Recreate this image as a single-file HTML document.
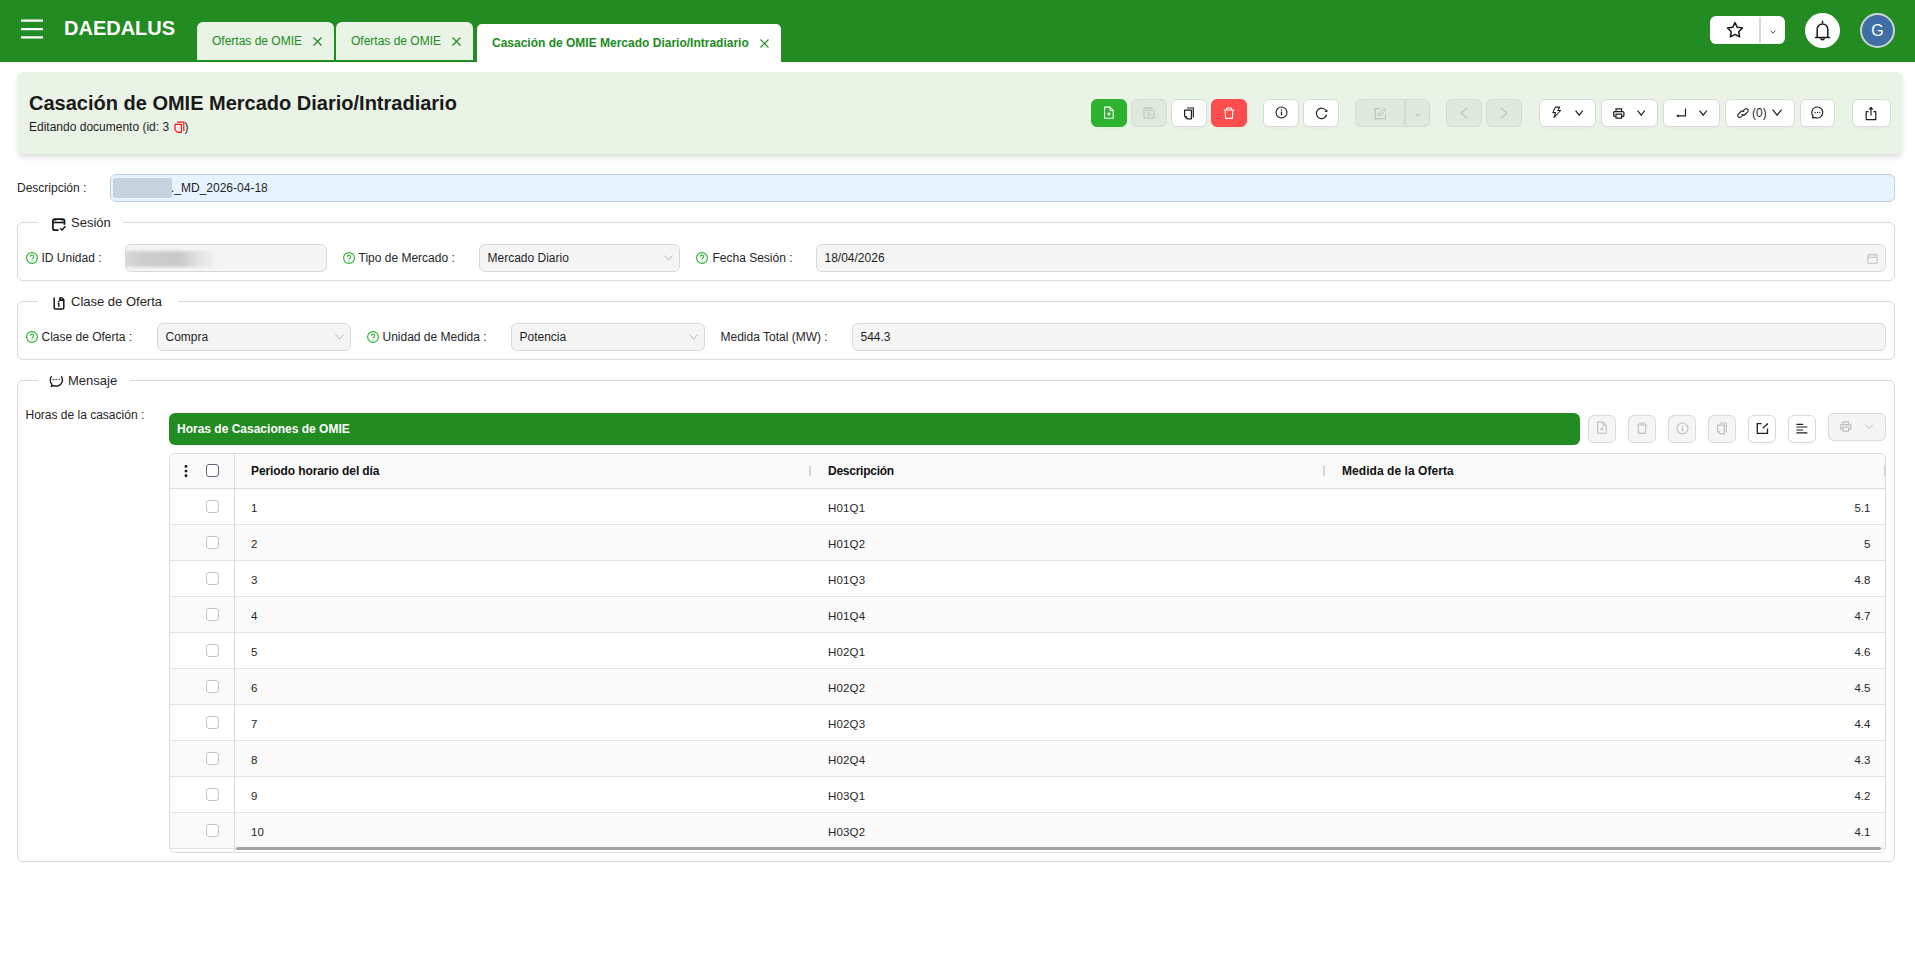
<!DOCTYPE html>
<html><head><meta charset="utf-8"><title>Daedalus</title><style>
*{box-sizing:border-box;margin:0;padding:0}
html,body{width:1915px;height:959px;overflow:hidden;background:#fff}
body{font-family:"Liberation Sans",sans-serif;font-size:12px;color:#1f1f1f;position:relative}
.a{position:absolute}
.t{position:absolute;white-space:nowrap;line-height:14px}
#hdr{left:0;top:0;width:1915px;height:62px;background:#228B22}
.tab{position:absolute;top:22px;height:38px;background:#e9f3e6;border-radius:6px 6px 0 0;color:#228B22}
.tab.on{top:24px;height:38px;background:#fff;font-weight:bold;border-radius:5px 5px 0 0}
.btn{position:absolute;top:99px;height:28px;width:36px;border-radius:6px;background:#fff;border:1px solid #d9d9d9;box-shadow:0 2px 0 rgba(0,0,0,0.02)}
.btn.dis{background:#e0e9dd;border-color:#d9d8d9;box-shadow:none}
.btn svg,.sb svg{position:absolute}
.sb{position:absolute;top:415px;height:28px;width:28px;border-radius:6px;background:#fff;border:1px solid #d9d9d9;box-shadow:0 2px 0 rgba(0,0,0,0.02)}
.sb.dis{background:#f5f5f5;box-shadow:none}
.fs{position:absolute;left:17px;width:1878px;border:1px solid #d9d9d9;border-radius:6px}
.lg{position:absolute;background:#fff;height:14px}
.lg .t{font-size:13px;line-height:16px;color:#262626}
.inp{position:absolute;height:28px;border:1px solid #d9d9d9;border-radius:6px;background:#f5f5f5}
.inp .t{top:6px;left:7.5px;color:#1f1f1f}
.lbl{color:#262626;margin-left:-0.500px}
.row{position:absolute;left:170px;width:1715px;height:36px;border-bottom:1px solid #e2e2e2}
.row.alt{background:#fafafa}
.row .t{top:12px;font-size:11.5px;letter-spacing:0.15px;color:#262626}
.cb{position:absolute;left:36px;top:11px;width:13px;height:13px;border:1px solid #c4c4c4;border-radius:3px;background:#fff}
</style></head><body>
<div id="hdr" class="a">
<svg class="a" style="left:21px;top:18px" width="22" height="22" viewBox="0 0 22 22" ><path d="M0 2.6H22M0 11.1H22M0 19.4H22" stroke="#fff" stroke-width="2.4"/></svg>
<div class="t" style="left:64px;top:18px;font-size:20px;line-height:20px;font-weight:bold;color:#fff">DAEDALUS</div>
<div class="tab" style="left:197px;width:137px"><div class="t" style="left:15px;top:12px">Ofertas de OMIE</div><svg class="a" style="left:116.3px;top:15px" width="9" height="9" viewBox="0 0 9 9" ><path d="M0.5 0.5L8.5 8.5M8.5 0.5L0.5 8.5" stroke="#228B22" stroke-width="1.2" fill="none"/></svg></div>
<div class="tab" style="left:336px;width:137px"><div class="t" style="left:15px;top:12px">Ofertas de OMIE</div><svg class="a" style="left:116.3px;top:15px" width="9" height="9" viewBox="0 0 9 9" ><path d="M0.5 0.5L8.5 8.5M8.5 0.5L0.5 8.5" stroke="#228B22" stroke-width="1.2" fill="none"/></svg></div>
<div class="tab on" style="left:477px;width:304px"><div class="t" style="left:15px;top:12px">Casación de OMIE Mercado Diario/Intradiario</div><svg class="a" style="left:283.3px;top:15px" width="9" height="9" viewBox="0 0 9 9" ><path d="M0.5 0.5L8.5 8.5M8.5 0.5L0.5 8.5" stroke="#228B22" stroke-width="1.2" fill="none"/></svg></div>
<div class="a" style="left:1710px;top:16px;width:75px;height:28px;background:#fff;border-radius:6px"></div>
<div class="a" style="left:1759px;top:17px;width:2px;height:26px;background:#d9d9d9"></div>
<svg class="a" style="left:1726px;top:20.5px" width="18" height="18" viewBox="0 0 18 18" ><path d="M9 1.6l2.3 4.7 5.2.75-3.75 3.65.9 5.15L9 13.4l-4.65 2.45.9-5.15L1.5 7.05l5.2-.75z" fill="none" stroke="#1a1a1a" stroke-width="1.5" stroke-linejoin="round"/></svg>
<svg class="a" style="left:1770px;top:30px" width="6" height="4" viewBox="0 0 6 4" ><path d="M0.6 0.6L3.0 3.2L5.4 0.6" stroke="#555" stroke-width="1" fill="none"/></svg>
<div class="a" style="left:1805px;top:13px;width:35px;height:35px;background:#fff;border-radius:50%"></div>
<svg class="a" style="left:1814px;top:20px" width="17" height="22" viewBox="0 0 17 22" ><path d="M8.5 1.2v1.6M1.5 17.4h14M3.2 17.4V9.3a5.3 5.3 0 0 1 10.6 0v8.1M6.9 18.2a1.6 1.6 0 0 0 3.2 0" fill="none" stroke="#1a1a1a" stroke-width="1.5" stroke-linecap="round"/></svg>
<div class="a" style="left:1860px;top:13px;width:35px;height:35px;background:#3e6ea3;border-radius:50%;border:2px solid #cdd3da"></div>
<div class="t" style="left:1860px;top:20.5px;width:35px;text-align:center;font-size:16px;line-height:20px;color:#fff">G</div>
</div>
<div class="a" style="left:17px;top:72px;width:1886px;height:82px;background:#e9f3e6;border-radius:6px;box-shadow:0 4px 6px -1px rgba(0,0,0,0.1),0 2px 4px -2px rgba(0,0,0,0.1)"></div>
<div class="t" style="left:29px;top:92px;font-size:20px;line-height:22px;font-weight:bold;color:#1a1a1a">Casación de OMIE Mercado Diario/Intradiario</div>
<div class="t" style="left:29px;top:120px;color:#1f1f1f">Editando documento (id: 3 <span style="display:inline-block;width:12px"></span>)</div>
<svg class="a" style="left:173.6px;top:121px" width="12" height="13" viewBox="0 0 12 13" ><path d="M3.2 1.2h6.6v8.8" fill="none" stroke="#f5151a" stroke-width="1.2"/><path d="M1 3.4h6.4v8h-3.8l-2.6-2.6z" fill="none" stroke="#f5151a" stroke-width="1.2" stroke-linejoin="round"/></svg>
<div class="btn" style="left:1091px;background:#2db230;border-color:#2db230"><svg class="a" style="left:11px;top:6px" width="12" height="14" viewBox="0 0 12 14" ><path d="M1.600 1.100h5.400l3.200 3.200v8H1.600z" fill="none" stroke="#fff" stroke-width="1.1" stroke-linejoin="round"/><path d="M7 1.3v3.2h3.2" fill="none" stroke="#fff" stroke-width="1"/><path d="M5.900 6.200v3.600M4.100 8h3.600" stroke="#fff" stroke-width="1"/></svg></div>
<div class="btn dis" style="left:1131px;width:36px;"><svg class="a" style="left:11px;top:7px" width="12" height="12" viewBox="0 0 12 12" ><path d="M1 1h7.6l2.4 2.4v7.6H1z" fill="none" stroke="#b9c0b9" stroke-width="1"/><path d="M3.4 1v2.2h4.4V1" fill="none" stroke="#b9c0b9" stroke-width="1"/><circle cx="6" cy="7.3" r="1.5" fill="none" stroke="#b9c0b9" stroke-width="1"/></svg></div>
<div class="btn " style="left:1171px;width:36px;"><svg class="a" style="left:11px;top:6.5px" width="12" height="13" viewBox="0 0 12 13" ><path d="M3.900 1h6.400v9.500" fill="none" stroke="#1f1f1f" stroke-width="1.200"/><path d="M1.600 3.100h6.800v8.700H4.200l-2.600-2.600z" fill="none" stroke="#1f1f1f" stroke-width="1.200" stroke-linejoin="round"/><path d="M1.600 9.200h2.600v2.600z" fill="#1f1f1f" stroke="none"/></svg></div>
<div class="btn" style="left:1211px;background:#ff4d4f;border-color:#ff4d4f"><svg class="a" style="left:11px;top:6.5px" width="12" height="13" viewBox="0 0 12 13" ><path d="M0.8 3h10.4" stroke="#fff" stroke-width="1.1"/><path d="M3.6 2.8V1h4.8v1.8" fill="none" stroke="#fff" stroke-width="1"/><path d="M2.200 3.200l.400 8.200h6.800l.400-8.200" fill="none" stroke="#fff" stroke-width="1.1" stroke-linejoin="round"/></svg></div>
<div class="btn " style="left:1263px;width:36px;"><svg class="a" style="left:10.5px;top:6.4px" width="13" height="13" viewBox="0 0 13 13" ><circle cx="6.500" cy="6.500" r="5.450" fill="none" stroke="#1f1f1f" stroke-width="1.100"/><path d="M6.500 5.600v3.700" stroke="#1f1f1f" stroke-width="1.300"/><circle cx="6.500" cy="4" r="0.750" fill="#1f1f1f"/></svg></div>
<div class="btn " style="left:1303px;width:36px;"><svg class="a" style="left:10.5px;top:6.5px" width="13" height="13" viewBox="0 0 13 13" ><path d="M10.860 3.420A5.200 5.200 0 1 0 11.620 7.750" fill="none" stroke="#1f1f1f" stroke-width="1.150"/><path d="M12.400 2.300v2.700H9.300z" fill="#1f1f1f"/></svg></div>
<div class="btn dis" style="left:1355px;width:75px"><svg class="a" style="left:17.8px;top:6.5px" width="13" height="13" viewBox="0 0 13 13" ><path d="M5.4 1.6H1.2v10.2h10.2V7.6" fill="none" stroke="#b9c0b9" stroke-width="1.1"/><path d="M4.4 8.6l.5-2.2 5.2-5.2 1.7 1.7-5.2 5.2z" fill="none" stroke="#b9c0b9" stroke-width="1" stroke-linejoin="round"/></svg><svg class="a" style="left:59px;top:13px" width="6" height="4" viewBox="0 0 6 4" ><path d="M0.6 0.6L3.0 3.2L5.4 0.6" stroke="#b9c0b9" stroke-width="1" fill="none"/></svg><div class="a" style="left:48px;top:-1px;width:2px;height:28px;background:#d9d8d9"></div></div>
<div class="btn dis" style="left:1446px;width:36px;"><svg class="a" style="left:13px;top:7px" width="8" height="12" viewBox="0 0 8 12" ><path d="M7 0.8L1.2 6 7 11.2" fill="none" stroke="#b9c0b9" stroke-width="1.1"/></svg></div>
<div class="btn dis" style="left:1486px;width:36px;"><svg class="a" style="left:13px;top:7px" width="8" height="12" viewBox="0 0 8 12" ><path d="M1 0.8L6.8 6 1 11.2" fill="none" stroke="#b9c0b9" stroke-width="1.1"/></svg></div>
<div class="btn " style="left:1538.5px;width:57px;"><svg class="a" style="left:10.5px;top:6.2px" width="12" height="13" viewBox="0 0 12 13" ><path d="M5.400 1.100h4.300L7.900 4.500h2.700L4.100 11.500l1.400-4.900H2.800z" fill="none" stroke="#1f1f1f" stroke-width="1.050" stroke-linejoin="round"/></svg><svg class="a" style="left:35.6px;top:9.9px" width="8.4" height="6" viewBox="0 0 8.4 6" ><path d="M0.6 0.6L4.2 5.2L7.800000000000001 0.6" stroke="#1f1f1f" stroke-width="1.2" fill="none"/></svg></div>
<div class="btn " style="left:1600.5px;width:57px;"><svg class="a" style="left:10.6px;top:6.5px" width="13" height="13" viewBox="0 0 13 13" ><path d="M4 4.300V1.800h5.600v2.500" fill="none" stroke="#1f1f1f" stroke-width="1.200"/><path d="M3.800 9.400H2.700a1 1 0 0 1-1-1V5.500a1 1 0 0 1 1-1h8.200a1 1 0 0 1 1 1v2.900a1 1 0 0 1-1 1H9.800" fill="none" stroke="#1f1f1f" stroke-width="1.250"/><path d="M4 7.200h5.600v4H4z" fill="none" stroke="#1f1f1f" stroke-width="1.200"/></svg><svg class="a" style="left:35.4px;top:9.9px" width="8.4" height="6" viewBox="0 0 8.4 6" ><path d="M0.6 0.6L4.2 5.2L7.800000000000001 0.6" stroke="#1f1f1f" stroke-width="1.2" fill="none"/></svg></div>
<div class="btn " style="left:1662.5px;width:57px;"><svg class="a" style="left:10px;top:7px" width="13" height="12" viewBox="0 0 13 12" ><path d="M11.500 1.400v7.500H3.600" fill="none" stroke="#1f1f1f" stroke-width="1.200"/><path d="M2.500 8.900l1.800-1.200v2.400z" fill="#1f1f1f" stroke="#1f1f1f" stroke-width="0.500" stroke-linejoin="round"/></svg><svg class="a" style="left:35.4px;top:9.9px" width="8.4" height="6" viewBox="0 0 8.4 6" ><path d="M0.6 0.6L4.2 5.2L7.800000000000001 0.6" stroke="#1f1f1f" stroke-width="1.2" fill="none"/></svg></div>
<div class="btn " style="left:1724.5px;width:70px;"><svg class="a" style="left:11px;top:7px" width="12" height="12" viewBox="0 0 12 12" ><path d="M5.300 8.700l-1.200 1.200a1.950 1.950 0 0 1-2.750-2.750l2.650-2.650a1.950 1.950 0 0 1 2.750 0" fill="none" stroke="#1f1f1f" stroke-width="1.100" stroke-linecap="round"/><path d="M6.700 3.300l1.200-1.200a1.950 1.950 0 0 1 2.750 2.750L8 7.500a1.950 1.950 0 0 1-2.750 0" fill="none" stroke="#1f1f1f" stroke-width="1.100" stroke-linecap="round"/></svg><div class="t" style="left:26.500px;top:6px;color:#1f1f1f">(0)</div><svg class="a" style="left:46.5px;top:9.2px" width="10.2" height="7" viewBox="0 0 10.2 7" ><path d="M0.6 0.6L5.1 6.2L9.6 0.6" stroke="#1f1f1f" stroke-width="1.2" fill="none"/></svg></div>
<div class="btn " style="left:1799.5px;width:35px;"><svg class="a" style="left:10px;top:6.3px" width="13" height="13" viewBox="0 0 13 13" ><path d="M2.3 10.3A5.5 5.5 0 1 1 4 11.5L1.4 12z" fill="none" stroke="#1f1f1f" stroke-width="1.1" stroke-linejoin="round"/><circle cx="4.2" cy="6.5" r="0.65" fill="#1f1f1f"/><circle cx="6.5" cy="6.5" r="0.65" fill="#1f1f1f"/><circle cx="8.8" cy="6.5" r="0.65" fill="#1f1f1f"/></svg></div>
<div class="btn " style="left:1851.5px;width:39px;"><svg class="a" style="left:12.5px;top:5.5px" width="12" height="15" viewBox="0 0 12 15" ><path d="M3.6 5.6H1.2v8h9.6v-8H8.4" fill="none" stroke="#1f1f1f" stroke-width="1.2" stroke-linejoin="round"/><path d="M6 1.6v8" stroke="#1f1f1f" stroke-width="1.2"/><path d="M3.3 3.6L6 0.8l2.7 2.8z" fill="#1f1f1f"/></svg></div>
<div class="t lbl" style="left:17px;top:181px;margin-left:0">Descripción :</div>
<div class="inp" style="left:110px;top:174px;width:1785px;background:#e6f4ff;border-color:#c3cdd6"><div class="a" style="left:2px;top:2.5px;width:59px;height:20px;background:#c7d4e0;border-radius:2px"></div><div class="t" style="left:60px;top:6px">._MD_2026-04-18</div></div>
<div class="fs" style="top:222px;height:59px"></div>
<div class="lg" style="left:38px;top:215px;width:85px"><svg class="a" style="left:14px;top:2.5px" width="14" height="14" viewBox="0 0 14 14" ><path d="M12.500 6.800V3.200a2 2 0 0 0-2-2H2.900a2 2 0 0 0-2 2v7a2 2 0 0 0 2 2H6.600" fill="none" stroke="#141414" stroke-width="1.7"/><path d="M1 4.500h11.400" stroke="#141414" stroke-width="1.6"/><path d="M3.500 1.2v1.500M9.900 1.2v1.500" stroke="#141414" stroke-width="1.3"/><path d="M8.300 10.300l1.700 1.700 3.400-3.700" fill="none" stroke="#141414" stroke-width="1.500"/></svg><div class="t" style="left:33px;top:0px">Sesión</div></div>
<svg class="a" style="left:26px;top:252px" width="12" height="12" viewBox="0 0 12 12" ><circle cx="6" cy="6" r="5.400" fill="none" stroke="#2db230" stroke-width="1.150"/><path d="M4.300 4.900a1.700 1.700 0 1 1 2.500 1.400c-.550.350-.800.700-.800 1.250" fill="none" stroke="#2db230" stroke-width="1.050"/><circle cx="6" cy="9" r="0.620" fill="#2db230"/></svg>
<div class="t lbl" style="left:42px;top:251px">ID Unidad :</div>
<div class="inp" style="left:125px;top:244px;width:202px;overflow:hidden"><div class="a" style="left:-3px;top:5.500px;width:94px;height:16px;border-radius:2px;background:linear-gradient(90deg,#dadada 0%,#cdcdcd 20%,#c9c9c9 60%,#e2e2e2 80%,#f4f4f4 100%);filter:blur(1.600px)"></div></div>
<svg class="a" style="left:343px;top:252px" width="12" height="12" viewBox="0 0 12 12" ><circle cx="6" cy="6" r="5.400" fill="none" stroke="#2db230" stroke-width="1.150"/><path d="M4.300 4.900a1.700 1.700 0 1 1 2.500 1.400c-.550.350-.800.700-.800 1.250" fill="none" stroke="#2db230" stroke-width="1.050"/><circle cx="6" cy="9" r="0.620" fill="#2db230"/></svg>
<div class="t lbl" style="left:359px;top:251px">Tipo de Mercado :</div>
<div class="inp" style="left:479px;top:244px;width:201px"><div class="t">Mercado Diario</div><svg class="a" style="left:183.5px;top:10px" width="9" height="6" viewBox="0 0 9 6" ><path d="M0.6 0.6L4.5 5.2L8.4 0.6" stroke="#b5b5b5" stroke-width="1" fill="none"/></svg></div>
<svg class="a" style="left:696px;top:252px" width="12" height="12" viewBox="0 0 12 12" ><circle cx="6" cy="6" r="5.400" fill="none" stroke="#2db230" stroke-width="1.150"/><path d="M4.300 4.900a1.700 1.700 0 1 1 2.500 1.400c-.550.350-.800.700-.800 1.250" fill="none" stroke="#2db230" stroke-width="1.050"/><circle cx="6" cy="9" r="0.620" fill="#2db230"/></svg>
<div class="t lbl" style="left:713px;top:251px">Fecha Sesión :</div>
<div class="inp" style="left:816px;top:244px;width:1070px"><div class="t">18/04/2026</div><svg class="a" style="left:1050px;top:8px" width="11" height="11" viewBox="0 0 11 11" ><path d="M0.8 1.8h9.4v8.400H0.8z" fill="none" stroke="#bfbfbf" stroke-width="1"/><path d="M0.8 4.200h9.4M3 0.6v2M8 0.6v2" stroke="#bfbfbf" stroke-width="1"/></svg></div>
<div class="fs" style="top:301px;height:59px"></div>
<div class="lg" style="left:38px;top:294px;width:140px"><svg class="a" style="left:14.7px;top:2.5px" width="13" height="14" viewBox="0 0 13 14" ><path d="M1.200 0.500v10.300a1.300 1.300 0 0 0 1.300 1.300h7a1.300 1.300 0 0 0 1.300-1.300V3.600" fill="none" stroke="#141414" stroke-width="1.500"/><path d="M6.800 0.800h2.300l1.800 1.800v0.800H6.800z" fill="#141414" stroke="#141414" stroke-width="1.200" stroke-linejoin="round"/><circle cx="8.600" cy="1.900" r="0.550" fill="#fff"/><circle cx="5.600" cy="4.700" r="0.850" fill="#141414"/><path d="M4.800 6.700h1v3.200" fill="none" stroke="#141414" stroke-width="1.350"/></svg><div class="t" style="left:33px;top:0px">Clase de Oferta</div></div>
<svg class="a" style="left:26px;top:331px" width="12" height="12" viewBox="0 0 12 12" ><circle cx="6" cy="6" r="5.400" fill="none" stroke="#2db230" stroke-width="1.150"/><path d="M4.300 4.900a1.700 1.700 0 1 1 2.500 1.400c-.550.350-.800.700-.800 1.250" fill="none" stroke="#2db230" stroke-width="1.050"/><circle cx="6" cy="9" r="0.620" fill="#2db230"/></svg>
<div class="t lbl" style="left:42px;top:330px">Clase de Oferta :</div>
<div class="inp" style="left:157px;top:323px;width:194px"><div class="t">Compra</div><svg class="a" style="left:176.5px;top:10px" width="9" height="6" viewBox="0 0 9 6" ><path d="M0.6 0.6L4.5 5.2L8.4 0.6" stroke="#b5b5b5" stroke-width="1" fill="none"/></svg></div>
<svg class="a" style="left:367px;top:331px" width="12" height="12" viewBox="0 0 12 12" ><circle cx="6" cy="6" r="5.400" fill="none" stroke="#2db230" stroke-width="1.150"/><path d="M4.300 4.900a1.700 1.700 0 1 1 2.500 1.400c-.550.350-.800.700-.800 1.250" fill="none" stroke="#2db230" stroke-width="1.050"/><circle cx="6" cy="9" r="0.620" fill="#2db230"/></svg>
<div class="t lbl" style="left:383px;top:330px">Unidad de Medida :</div>
<div class="inp" style="left:511px;top:323px;width:194px"><div class="t">Potencia</div><svg class="a" style="left:176.5px;top:10px" width="9" height="6" viewBox="0 0 9 6" ><path d="M0.6 0.6L4.5 5.2L8.4 0.6" stroke="#b5b5b5" stroke-width="1" fill="none"/></svg></div>
<div class="t lbl" style="left:721px;top:330px">Medida Total (MW) :</div>
<div class="inp" style="left:852px;top:323px;width:1034px"><div class="t">544.3</div></div>
<div class="fs" style="top:380px;height:482px"></div>
<div class="lg" style="left:38px;top:373px;width:92px"><svg class="a" style="left:11px;top:3px" width="15" height="12" viewBox="0 0 15 12" ><path d="M2.600 0.300C0.600 2.800 0.900 6.400 3 8.400L2.300 10.400l2.600-.7c3.200 1.300 6.900-.3 8.100-3.400.8-2.100.4-4.300-.9-6" fill="none" stroke="#141414" stroke-width="1.300" stroke-linejoin="round"/><circle cx="4.200" cy="3.500" r="0.700" fill="#141414"/><circle cx="7.100" cy="3.500" r="0.700" fill="#141414"/><circle cx="10.200" cy="3.500" r="0.700" fill="#141414"/></svg><div class="t" style="left:30px;top:0px">Mensaje</div></div>
<div class="t lbl" style="left:26px;top:408px">Horas de la casación :</div>
<div class="a" style="left:169px;top:413px;width:1411px;height:32px;background:#228B22;border-radius:6px"><div class="t" style="left:8px;top:9px;color:#fff;font-weight:bold">Horas de Casaciones de OMIE</div></div>
<div class="sb dis" style="left:1588px"><svg class="a" style="left:7px;top:5.3px" width="12" height="14" viewBox="0 0 12 14" ><path d="M1.600 1.100h5.400l3.200 3.200v8H1.600z" fill="none" stroke="#bfbfbf" stroke-width="1.1" stroke-linejoin="round"/><path d="M7 1.3v3.2h3.2" fill="none" stroke="#bfbfbf" stroke-width="1"/><path d="M5.900 6.200v3.600M4.100 8h3.600" stroke="#bfbfbf" stroke-width="1"/></svg></div>
<div class="sb dis" style="left:1628px"><svg class="a" style="left:7px;top:5.8px" width="12" height="13" viewBox="0 0 12 13" ><path d="M0.8 3h10.4" stroke="#bfbfbf" stroke-width="1.1"/><path d="M3.6 2.8V1h4.8v1.8" fill="none" stroke="#bfbfbf" stroke-width="1"/><path d="M2.200 3.200l.400 8.200h6.800l.400-8.200" fill="none" stroke="#bfbfbf" stroke-width="1.1" stroke-linejoin="round"/></svg></div>
<div class="sb dis" style="left:1668px"><svg class="a" style="left:6.5px;top:5.8px" width="13" height="13" viewBox="0 0 13 13" ><circle cx="6.500" cy="6.500" r="5.450" fill="none" stroke="#bfbfbf" stroke-width="1.100"/><path d="M6.500 5.600v3.700" stroke="#bfbfbf" stroke-width="1.300"/><circle cx="6.500" cy="4" r="0.750" fill="#bfbfbf"/></svg></div>
<div class="sb dis" style="left:1708px"><svg class="a" style="left:7px;top:5.8px" width="12" height="13" viewBox="0 0 12 13" ><path d="M3.900 1h6.400v9.500" fill="none" stroke="#bfbfbf" stroke-width="1.200"/><path d="M1.600 3.100h6.800v8.700H4.200l-2.600-2.600z" fill="none" stroke="#bfbfbf" stroke-width="1.200" stroke-linejoin="round"/><path d="M1.600 9.200h2.600v2.600z" fill="#bfbfbf" stroke="none"/></svg></div>
<div class="sb " style="left:1748px"><svg class="a" style="left:6.5px;top:5.8px" width="13" height="13" viewBox="0 0 13 13" ><path d="M5.600 1.600H1.300v9.700h10.200V6.600" fill="none" stroke="#1f1f1f" stroke-width="1.300"/><path d="M6.700 6.200l4.400-3.900" stroke="#1f1f1f" stroke-width="1.250"/><circle cx="11.200" cy="2.100" r="0.950" fill="#1f1f1f"/></svg></div>
<div class="sb " style="left:1788px"><svg class="a" style="left:7.3px;top:6.6px" width="12" height="12" viewBox="0 0 12 12" ><path d="M0.400 1.300h6.800M0.400 4h11M0.400 7h6.800M0.400 9.900h11" stroke="#1f1f1f" stroke-width="1.200"/></svg></div>
<div class="sb dis" style="left:1828px;top:413px;width:58px"><svg class="a" style="left:10.4px;top:6.4px" width="13" height="13" viewBox="0 0 13 13" ><path d="M4 4.300V1.800h5.600v2.500" fill="none" stroke="#bfbfbf" stroke-width="1.200"/><path d="M3.800 9.400H2.700a1 1 0 0 1-1-1V5.500a1 1 0 0 1 1-1h8.200a1 1 0 0 1 1 1v2.900a1 1 0 0 1-1 1H9.800" fill="none" stroke="#bfbfbf" stroke-width="1.250"/><path d="M4 7.200h5.600v4H4z" fill="none" stroke="#bfbfbf" stroke-width="1.200"/></svg><svg class="a" style="left:36px;top:10px" width="8.2" height="5.4" viewBox="0 0 8.2 5.4" ><path d="M0.6 0.6L4.1 4.6000000000000005L7.6 0.6" stroke="#bfbfbf" stroke-width="1" fill="none"/></svg></div>
<div class="a" style="left:169px;top:453px;width:1717px;height:400px;border:1px solid #dcdcdc;border-radius:6px;overflow:hidden;background:#fff">
<div class="a" style="left:0;top:0;width:1716px;height:35px;background:#fafafa;border-bottom:1px solid #dcdcdc"></div>
</div>
<div class="row" style="top:489px"><div class="cb"></div><div class="t" style="left:81px">1</div><div class="t" style="left:658px">H01Q1</div><div class="t" style="right:14.600px;letter-spacing:0">5.1</div></div>
<div class="row alt" style="top:525px"><div class="cb"></div><div class="t" style="left:81px">2</div><div class="t" style="left:658px">H01Q2</div><div class="t" style="right:14.600px;letter-spacing:0">5</div></div>
<div class="row" style="top:561px"><div class="cb"></div><div class="t" style="left:81px">3</div><div class="t" style="left:658px">H01Q3</div><div class="t" style="right:14.600px;letter-spacing:0">4.8</div></div>
<div class="row alt" style="top:597px"><div class="cb"></div><div class="t" style="left:81px">4</div><div class="t" style="left:658px">H01Q4</div><div class="t" style="right:14.600px;letter-spacing:0">4.7</div></div>
<div class="row" style="top:633px"><div class="cb"></div><div class="t" style="left:81px">5</div><div class="t" style="left:658px">H02Q1</div><div class="t" style="right:14.600px;letter-spacing:0">4.6</div></div>
<div class="row alt" style="top:669px"><div class="cb"></div><div class="t" style="left:81px">6</div><div class="t" style="left:658px">H02Q2</div><div class="t" style="right:14.600px;letter-spacing:0">4.5</div></div>
<div class="row" style="top:705px"><div class="cb"></div><div class="t" style="left:81px">7</div><div class="t" style="left:658px">H02Q3</div><div class="t" style="right:14.600px;letter-spacing:0">4.4</div></div>
<div class="row alt" style="top:741px"><div class="cb"></div><div class="t" style="left:81px">8</div><div class="t" style="left:658px">H02Q4</div><div class="t" style="right:14.600px;letter-spacing:0">4.3</div></div>
<div class="row" style="top:777px"><div class="cb"></div><div class="t" style="left:81px">9</div><div class="t" style="left:658px">H03Q1</div><div class="t" style="right:14.600px;letter-spacing:0">4.2</div></div>
<div class="row alt" style="top:813px"><div class="cb"></div><div class="t" style="left:81px">10</div><div class="t" style="left:658px">H03Q2</div><div class="t" style="right:14.600px;letter-spacing:0">4.1</div></div>
<svg class="a" style="left:184px;top:464px" width="4" height="14" viewBox="0 0 4 14" ><circle cx="2" cy="2.400" r="1.450" fill="#1a1a1a"/><circle cx="2" cy="7.100" r="1.450" fill="#1a1a1a"/><circle cx="2" cy="11.800" r="1.450" fill="#1a1a1a"/></svg>
<div class="cb" style="left:206px;top:464px;border-color:#62627a"></div>
<div class="t" style="left:251px;top:464px;font-weight:bold;color:#111;letter-spacing:-0.1px">Periodo horario del día</div>
<div class="t" style="left:828px;top:464px;font-weight:bold;color:#111;letter-spacing:-0.25px">Descripción</div>
<div class="t" style="left:1342px;top:464px;font-weight:bold;color:#111;letter-spacing:0.05px">Medida de la Oferta</div>
<div class="a" style="left:809px;top:466px;width:2px;height:10px;background:#d4d4d4"></div>
<div class="a" style="left:1323px;top:466px;width:2px;height:10px;background:#d4d4d4"></div>
<div class="a" style="left:1884px;top:466px;width:2px;height:10px;background:#d4d4d4"></div>
<div class="a" style="left:234px;top:454px;width:1px;height:398px;background:#dcdcdc"></div>
<div class="a" style="left:236px;top:847px;width:1645px;height:3px;background:#a0a0a0;border-radius:2px"></div>
</body></html>
